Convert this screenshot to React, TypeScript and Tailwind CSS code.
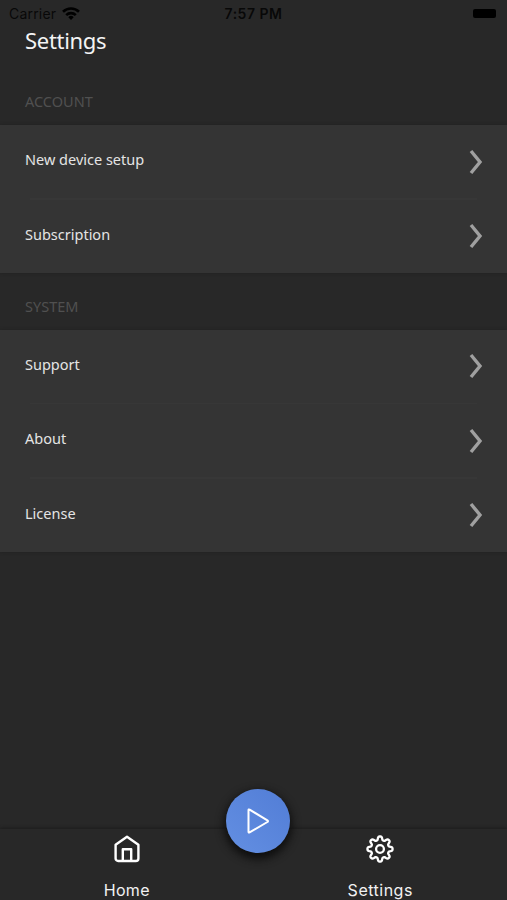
import React from 'react';

const sections = [
  { title: 'Account', items: ['New device setup', 'Subscription'] },
  { title: 'System', items: ['Support', 'About', 'License'] },
];

// Closed outline with eight rounded teeth, first one pointing up
const gearPath = (() => {
  const steps = 160;
  const points: string[] = [];
  for (let i = 0; i < steps; i++) {
    const angle = (i / steps) * Math.PI * 2;
    const r = 10.8 + 1.85 * Math.tanh(1.8 * Math.cos(8 * angle));
    points.push(`${(14 + r * Math.sin(angle)).toFixed(2)} ${(14 - r * Math.cos(angle)).toFixed(2)}`);
  }
  return `M${points.join('L')}Z`;
})();

const StatusBar: React.FC = () => (
  <div className="relative flex h-[26px] items-center px-[9px] pt-px font-['Inter','Liberation_Sans',sans-serif] text-[14px] leading-[26px] text-[#080808]">
    <span className="w-[53px] tracking-[0.2px]">Carrier</span>
    <svg className="h-[13px] w-[18px]" viewBox="0 0 18 13" fill="none" stroke="#000" strokeWidth="2.6">
      <path d="M1 4.8a11.4 11.4 0 0 1 16 0" />
      <path d="M4.2 8.1a6.8 6.8 0 0 1 9.6 0" />
      <path d="M9 13L6.3 10.2a3.8 3.8 0 0 1 5.4 0z" fill="#000" stroke="none" />
    </svg>
    <span className="absolute inset-x-0 top-px text-center font-semibold tracking-[0.5px]">7:57 PM</span>
    <span className="mr-[2px] ml-auto h-[9px] w-[23px] rounded-[2px] bg-black" />
  </div>
);

const Row: React.FC<{ label: string; divider: boolean }> = ({ label, divider }) => (
  <div>
    <button type="button" className="flex h-[73px] w-full items-center justify-between pr-[24px] pl-[25px]">
      <span className="pb-[5px] text-[14.5px] leading-5 text-[#e4e4e4]">{label}</span>
      <svg className="h-[26px] w-[14px]" viewBox="0 0 14 26" fill="none" stroke="#a0a0a0" strokeWidth="3.4">
        <path d="M2 2l9 11-9 11" />
      </svg>
    </button>
    {divider && <div className="mx-[30px] h-[1.5px] bg-[#373737]" />}
  </div>
);

const App: React.FC = () => {
  return (
    <div className="flex h-[900px] w-[507px] flex-col overflow-hidden bg-[#282828] font-['Noto_Sans',sans-serif]">
      <StatusBar />
      <h1 className="h-[42px] pl-[25px] text-[22px] leading-[28px] tracking-[-0.3px] text-[#f4f4f4]">Settings</h1>

      {sections.map((section) => (
        <section key={section.title}>
          <h2 className="h-[57px] pt-[23px] pl-[25px] text-[14.5px] leading-5 text-[#505050] uppercase">
            {section.title}
          </h2>
          <div className="bg-[#343434] shadow-[0_0_3px_#202020]">
            {section.items.map((item, i) => (
              <Row key={item} label={item} divider={i < section.items.length - 1} />
            ))}
          </div>
        </section>
      ))}

      {/* Bottom tabs */}
      <nav className="relative mt-auto grid h-[71px] grid-cols-2 bg-[#282828] font-['Inter','Liberation_Sans',sans-serif] text-[16px] leading-5 text-[#f2f2f2] shadow-[0_-1px_3px_#1c1c1c]">
        <button type="button" className="flex flex-col items-center pt-[6px]">
          <svg className="h-[28px] w-[28px]" viewBox="0 0 28 28" fill="none" stroke="#fff" strokeWidth="2.4" strokeLinejoin="round">
            <path d="M2.6 9.8L14 1.8l11.4 8v13.6a2.6 2.6 0 0 1-2.6 2.6H5.2a2.6 2.6 0 0 1-2.6-2.6z" />
            <path d="M9.8 26V14.2h8.4V26" />
          </svg>
          <span className="mt-[17px] tracking-[0.3px]">Home</span>
        </button>
        <button type="button" className="flex flex-col items-center pt-[6px]">
          <svg className="h-[28px] w-[28px]" viewBox="0 0 28 28" fill="none" stroke="#fff" strokeWidth="2.3" strokeLinejoin="round">
            <path d={gearPath} />
            <circle cx="14" cy="14" r="3.9" />
          </svg>
          <span className="mt-[17px] tracking-[0.5px]">Settings</span>
        </button>
        {/* Play button sits over the top edge of the bar */}
        <button
          type="button"
          aria-label="Play"
          className="absolute top-[-40px] left-[226px] flex h-[64px] w-[64px] items-center justify-center rounded-full bg-linear-to-tr from-[#638fe2] to-[#527dd6] shadow-[0_4px_9px_2px_#0e0e0e]"
        >
          <svg className="h-[28px] w-[24px]" viewBox="0 0 24 28" fill="none" stroke="#fff" strokeWidth="2" strokeLinejoin="round">
            <path d="M2.5 3.2v21.6q0 1.2 1.1.6L21.4 15q1.2-.8 0-1.6L3.6 2.6q-1.1-.6-1.1.6z" />
          </svg>
        </button>
      </nav>
    </div>
  );
};

export default App;
